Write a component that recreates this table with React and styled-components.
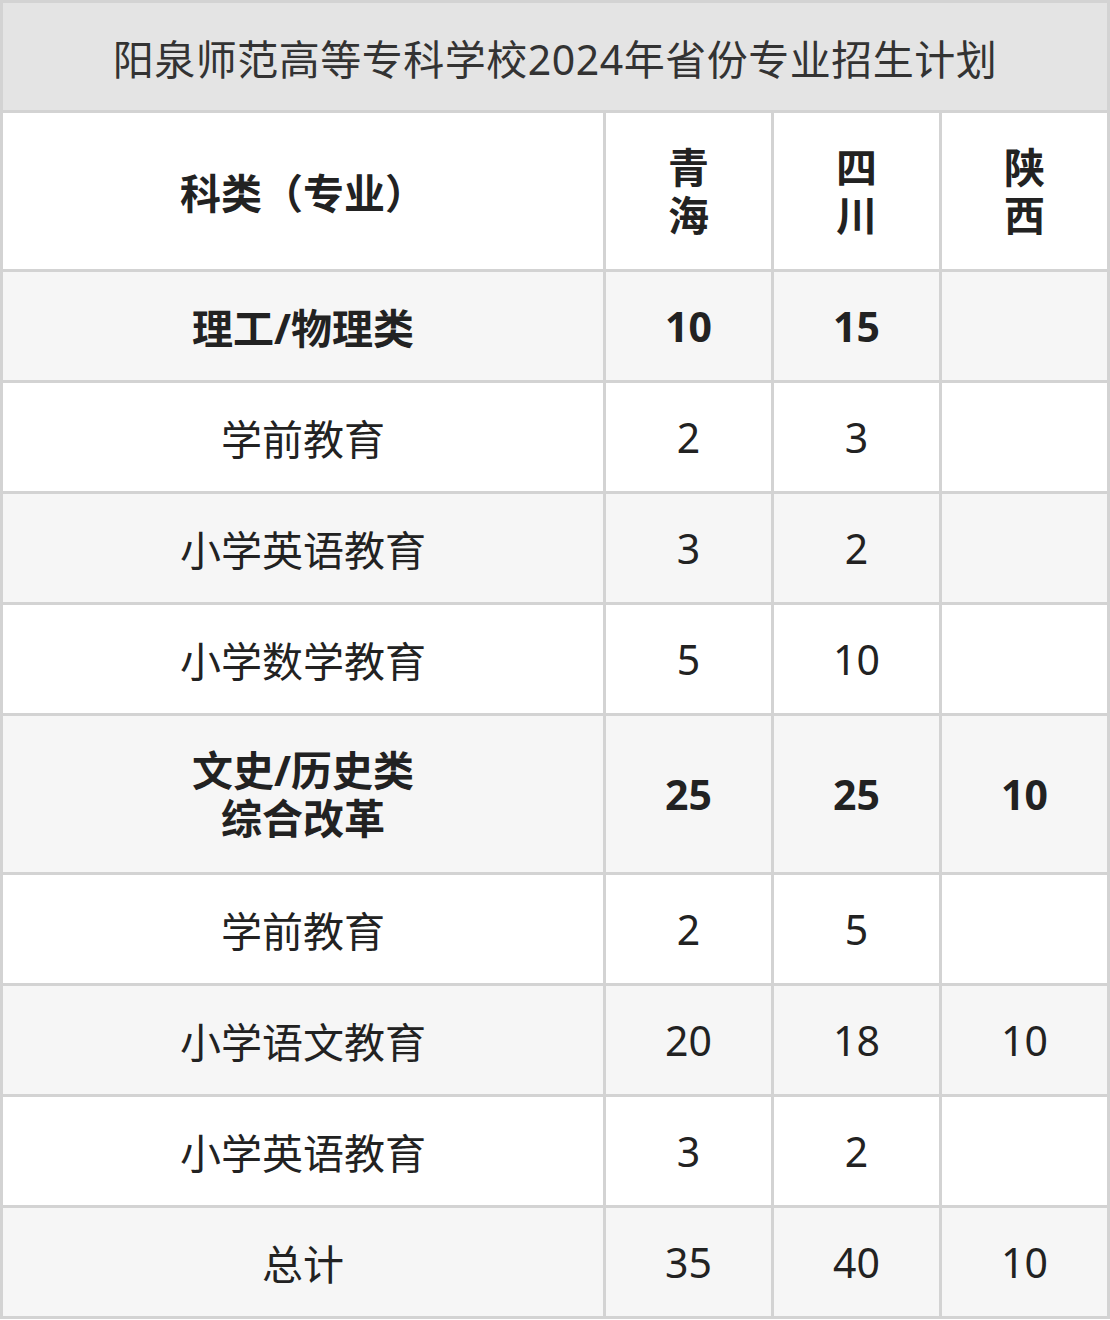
import styled, { createGlobalStyle } from "styled-components";

const GlobalStyle = createGlobalStyle`
  html, body {
    margin: 0;
    padding: 0;
    background: #ffffff;
  }
  body {
    font-family: "Noto Sans", "Noto Sans CJK SC", sans-serif;
  }
`;

const rows = [
  { name: "理工/物理类", values: ["10", "15", ""], group: true },
  { name: "学前教育", values: ["2", "3", ""] },
  { name: "小学英语教育", values: ["3", "2", ""] },
  { name: "小学数学教育", values: ["5", "10", ""] },
  { name: ["文史/历史类", "综合改革"], values: ["25", "25", "10"], group: true, tall: true },
  { name: "学前教育", values: ["2", "5", ""] },
  { name: "小学语文教育", values: ["20", "18", "10"] },
  { name: "小学英语教育", values: ["3", "2", ""] },
  { name: "总计", values: ["35", "40", "10"] },
];

export default function App() {
  return (
    <>
      <GlobalStyle />
      <Table>
        <Title>阳泉师范高等专科学校2024年省份专业招生计划</Title>

        <HeadCell $tall>科类（专业）</HeadCell>
        <HeadCell $tall>
          <Lines>
            <span>青</span>
            <span>海</span>
          </Lines>
        </HeadCell>
        <HeadCell $tall>
          <Lines>
            <span>四</span>
            <span>川</span>
          </Lines>
        </HeadCell>
        <HeadCell $tall>
          <Lines>
            <span>陕</span>
            <span>西</span>
          </Lines>
        </HeadCell>

        {/* 奇数行灰底，偶数行白底 */}
        {rows.map((row, i) => {
          const shade = i % 2 === 0;
          return [
            <Cell key={`n${i}`} $shade={shade} $bold={row.group} $tall={row.tall}>
              {Array.isArray(row.name) ? (
                <Lines>
                  {row.name.map((line) => (
                    <span key={line}>{line}</span>
                  ))}
                </Lines>
              ) : (
                row.name
              )}
            </Cell>,
            ...row.values.map((v, j) => (
              <Cell key={`v${i}-${j}`} $shade={shade} $bold={row.group} $tall={row.tall}>
                {v}
              </Cell>
            )),
          ];
        })}
      </Table>
    </>
  );
}

const Table = styled.div`
  display: grid;
  grid-template-columns: 600px 165px 165px 165px;
  gap: 3px;
  padding: 3px;
  width: 1110px;
  box-sizing: border-box;
  background-color: #d3d3d3;
`;

const Title = styled.div`
  grid-column: 1 / span 4;
  height: 107px;
  display: flex;
  align-items: center;
  justify-content: center;
  background-color: #e4e4e4;
  color: #333333;
  font-size: 41px;
  letter-spacing: 0.5px;
`;

const Cell = styled.div`
  height: ${({ $tall }) => ($tall ? "156px" : "108px")};
  display: flex;
  align-items: center;
  justify-content: center;
  text-align: center;
  background-color: ${({ $shade }) => ($shade ? "#f6f6f6" : "#ffffff")};
  color: #222222;
  font-size: 41px;
  font-weight: ${({ $bold }) => ($bold ? 700 : 400)};
`;

const HeadCell = styled(Cell)`
  background-color: #ffffff;
  font-weight: 700;
`;

const Lines = styled.div`
  display: flex;
  flex-direction: column;
  align-items: center;
  line-height: 48px;
`;
